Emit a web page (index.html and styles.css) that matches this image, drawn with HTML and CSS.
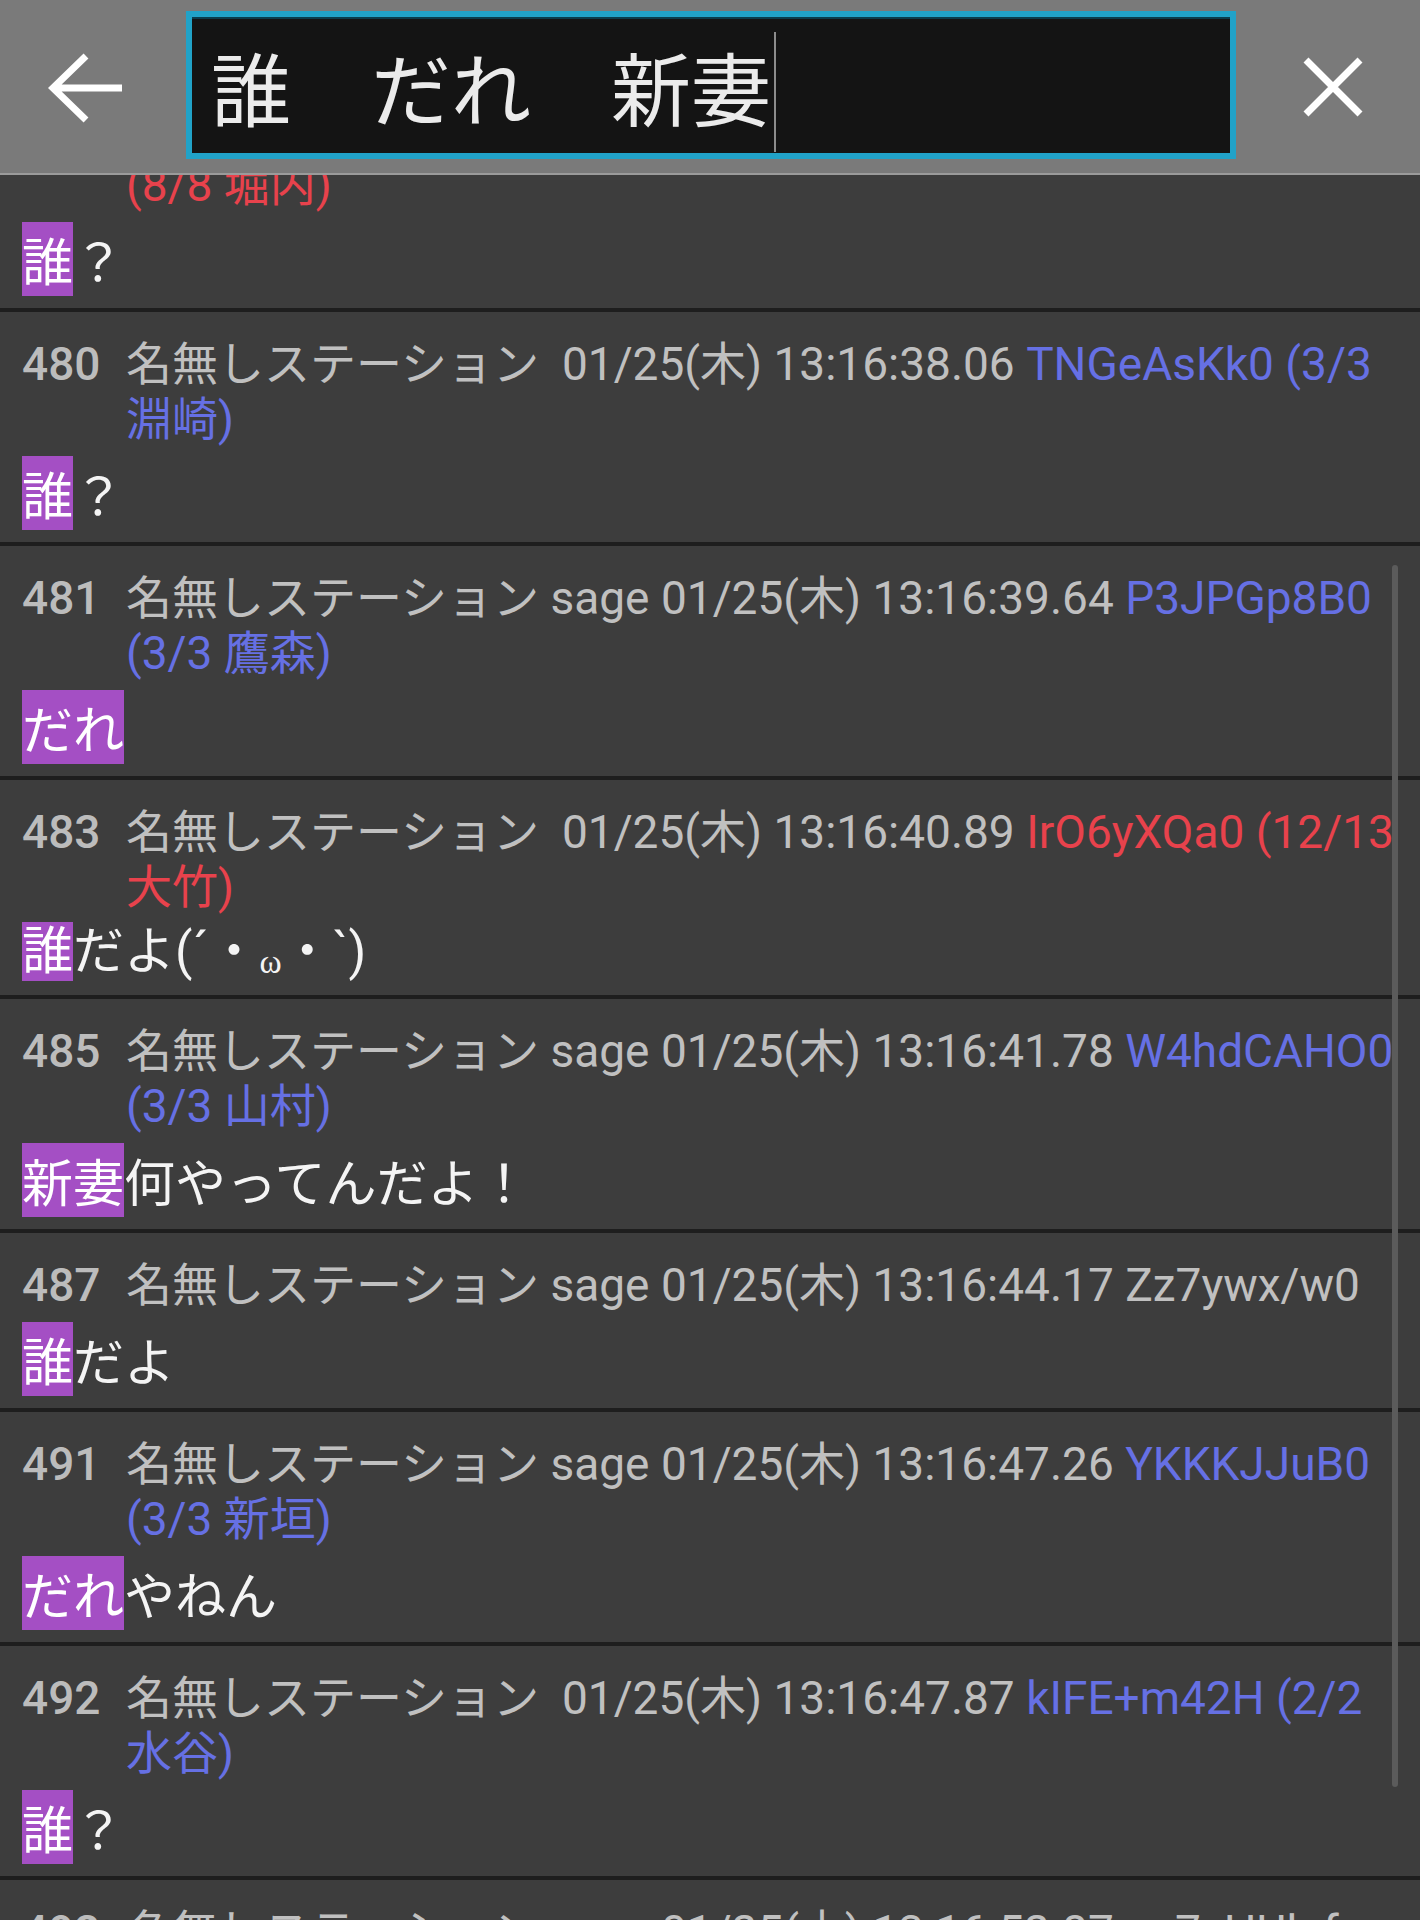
FILE: index.html
```html
<!DOCTYPE html>
<html lang="ja">
<head>
<meta charset="utf-8">
<title>検索</title>
<link rel="stylesheet" href="styles.css">
</head>
<body>
<div class="app">
  <header class="topbar">
    <button class="icon-btn back" aria-label="戻る">
      <svg width="76" height="70" viewBox="0 0 76 70"><path d="M5 35 H74 M38 3 L5 35 L38 67" fill="none" stroke="#ffffff" stroke-width="7"/></svg>
    </button>
    <div class="search">
      <span class="query">誰　だれ　新妻</span><span class="caret"></span>
    </div>
    <button class="icon-btn close" aria-label="閉じる">
      <svg width="62" height="62" viewBox="0 0 62 62"><path d="M4 4 L58 58 M58 4 L4 58" fill="none" stroke="#ffffff" stroke-width="7"/></svg>
    </button>
  </header>

  <main class="viewport">
    <div class="list">
      <article class="post">
        <div class="head"><span class="num"></span><span class="meta"><span class="id red">(8/8 堀内)</span></span></div>
        <div class="body"><mark class="hl">誰</mark>？</div>
      </article>

      <article class="post">
        <div class="head"><span class="num">480</span><span class="meta"><span class="name">名無しステーション</span>&nbsp; <span class="date">01/25(木) 13:16:38.06</span> <span class="id blue">TNGeAsKk0 (3/3 淵崎)</span></span></div>
        <div class="body"><mark class="hl">誰</mark>？</div>
      </article>

      <article class="post">
        <div class="head"><span class="num">481</span><span class="meta"><span class="name">名無しステーション</span> <span class="mail">sage</span> <span class="date">01/25(木) 13:16:39.64</span> <span class="id blue">P3JPGp8B0 (3/3 鷹森)</span></span></div>
        <div class="body"><mark class="hl">だれ</mark></div>
      </article>

      <article class="post compact">
        <div class="head"><span class="num">483</span><span class="meta"><span class="name">名無しステーション</span>&nbsp; <span class="date">01/25(木) 13:16:40.89</span> <span class="id red">IrO6yXQa0 (12/13 大竹)</span></span></div>
        <div class="body"><mark class="hl">誰</mark>だよ(´・<span class="small">ω</span>・`)</div>
      </article>

      <article class="post">
        <div class="head"><span class="num">485</span><span class="meta"><span class="name">名無しステーション</span> <span class="mail">sage</span> <span class="date">01/25(木) 13:16:41.78</span> <span class="id blue">W4hdCAHO0 (3/3 山村)</span></span></div>
        <div class="body"><mark class="hl">新妻</mark>何やってんだよ！</div>
      </article>

      <article class="post">
        <div class="head"><span class="num">487</span><span class="meta"><span class="name">名無しステーション</span> <span class="mail">sage</span> <span class="date">01/25(木) 13:16:44.17</span> <span class="id">Zz7ywx/w0</span></span></div>
        <div class="body"><mark class="hl">誰</mark>だよ</div>
      </article>

      <article class="post">
        <div class="head"><span class="num">491</span><span class="meta"><span class="name">名無しステーション</span> <span class="mail">sage</span> <span class="date">01/25(木) 13:16:47.26</span> <span class="id blue">YKKKJJuB0 (3/3 新垣)</span></span></div>
        <div class="body"><mark class="hl">だれ</mark>やねん</div>
      </article>

      <article class="post">
        <div class="head"><span class="num">492</span><span class="meta"><span class="name">名無しステーション</span>&nbsp; <span class="date">01/25(木) 13:16:47.87</span> <span class="id blue">kIFE+m42H (2/2 水谷)</span></span></div>
        <div class="body"><mark class="hl">誰</mark>？</div>
      </article>

      <article class="post">
        <div class="head"><span class="num">493</span><span class="meta"><span class="name">名無しステーション</span> <span class="mail">sage</span> <span class="date">01/25(木) 13:16:52.87</span> <span class="id">ne7zHUlufo</span></span></div>
        <div class="body"><mark class="hl">誰</mark>？</div>
      </article>
    </div>
    <div class="scrollbar"></div>
  </main>
</div>
</body>
</html>
```

FILE: styles.css
```css
html, body {
  margin: 0;
  padding: 0;
  background: #3d3d3d;
}

.app {
  width: 1420px;
  height: 1920px;
  overflow: hidden;
  display: flex;
  flex-direction: column;
  font-family: Roboto, "Noto Sans CJK JP", sans-serif;
}

/* ---------- top bar ---------- */
.topbar {
  flex: 0 0 auto;
  height: 173px;
  background: #7a7a7a;
  border-bottom: 2px solid #9b9b9b;
  display: flex;
  align-items: center;
  position: relative;
  z-index: 1;
}

.icon-btn {
  border: 0;
  background: transparent;
  padding: 0;
  margin: 0;
  display: flex;
  align-items: center;
  justify-content: center;
  height: 100%;
}

.icon-btn svg {
  display: block;
}

.back {
  flex: 0 0 172px;
  padding-top: 3px;
}

.close {
  flex: 1 1 auto;
  padding-left: 10px;
  padding-top: 1px;
}

.search {
  flex: 0 0 auto;
  margin-left: 14px;
  width: 1019px;
  height: 136px;
  border: 6px solid #21a2c8;
  background: #141414;
  box-shadow: inset 0 2px 0 #0b3c4c;
  display: flex;
  align-items: center;
  padding-left: 19px;
  box-sizing: content-box;
  margin-top: -3px;
}

.query {
  font-family: "Noto Sans CJK JP", sans-serif;
  font-size: 80px;
  line-height: 80px;
  color: #ebebeb;
  white-space: pre;
}

.caret {
  width: 2px;
  height: 120px;
  background: #8c8c8c;
  margin-left: 3px;
  margin-top: 14px;
}

/* ---------- list ---------- */
.viewport {
  flex: 1 1 auto;
  position: relative;
  overflow: hidden;
  background: #3d3d3d;
}

.list {
  margin-top: -46px;
}

.post {
  border-top: 4px solid #1e1e1e;
  padding: 25px 15px 12px 22px;
  background: #3d3d3d;
}

.head {
  display: flex;
  font-family: Roboto, "Noto Sans CJK JP", sans-serif;
  font-size: 46px;
  line-height: 55px;
  color: #c0c0c0;
}

.num {
  flex: 0 0 104px;
  font-weight: 500;
  color: #bcbcbc;
}

.meta {
  flex: 1 1 auto;
  min-width: 0;
}

.id.blue {
  color: #6670e4;
}

.id.red {
  color: #e8424c;
}

.body {
  margin-top: 9px;
  font-family: "Noto Sans CJK JP", sans-serif;
  font-size: 51px;
  line-height: 74px;
  color: #f4f4f4;
}

.hl {
  background: #a44fc4;
  color: #ffffff;
}

.post.compact {
  padding-bottom: 13px;
}

.post.compact .body {
  margin-top: 7px;
  line-height: 60px;
  font-family: Roboto, "Noto Sans CJK JP", sans-serif;
}

.small {
  font-family: "Liberation Serif", serif;
  font-size: 0.66em;
  line-height: 0;
  vertical-align: -0.12em;
}

.scrollbar {
  position: absolute;
  top: 390px;
  right: 22px;
  width: 6px;
  height: 1222px;
  border-radius: 3px;
  background: #5b5b5b;
}
```
